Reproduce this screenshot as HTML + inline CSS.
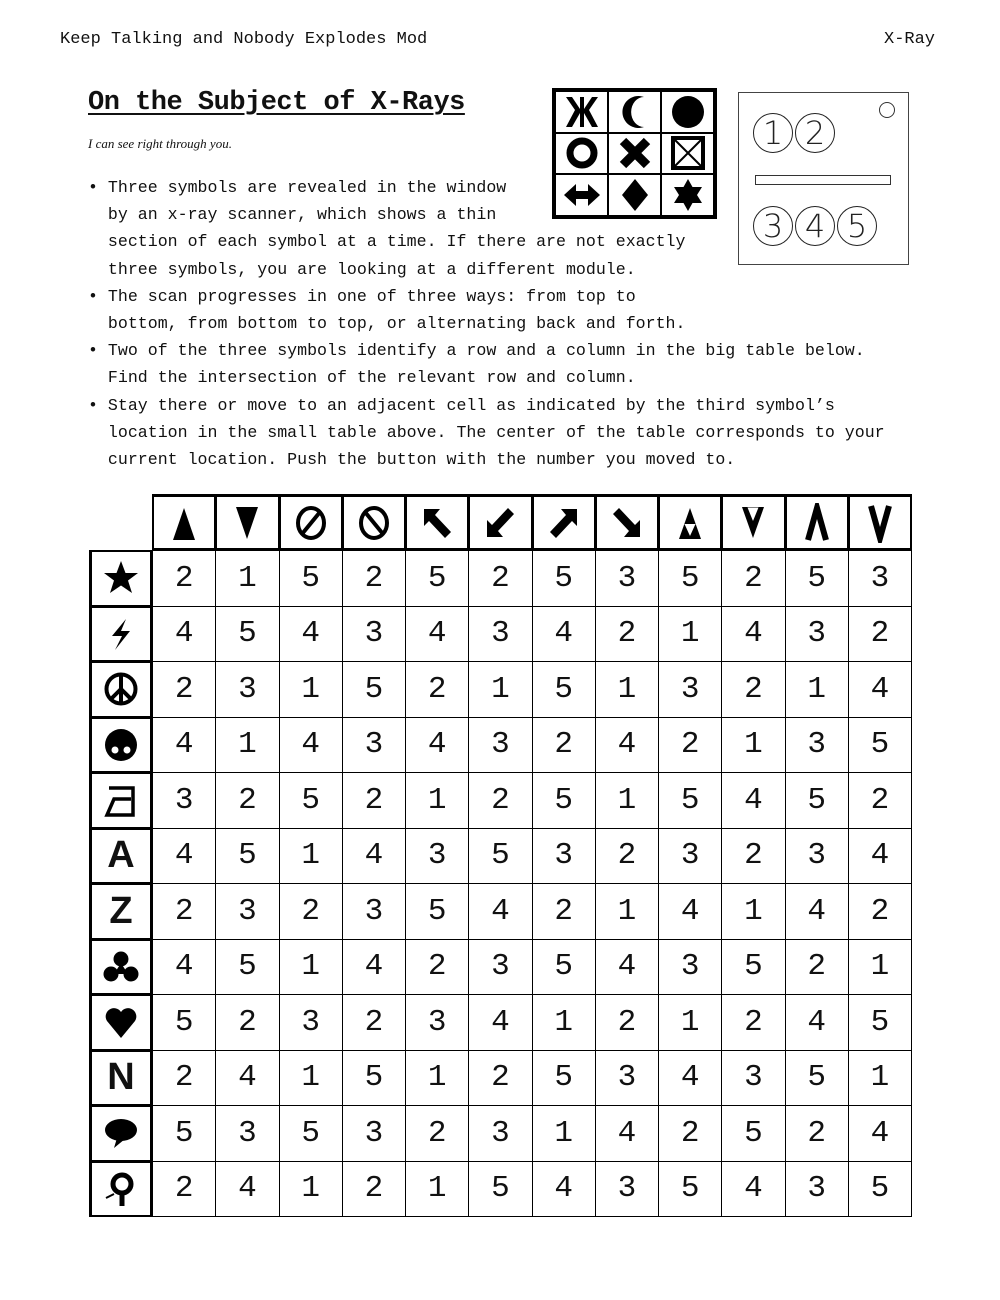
<!DOCTYPE html>
<html><head><meta charset="utf-8"><style>
*{margin:0;padding:0;box-sizing:border-box}
body{width:1000px;height:1300px;background:#fff;position:relative;font-family:"Liberation Mono",monospace;color:#111;overflow:hidden}
.a{position:absolute;white-space:nowrap}
.hdr{font-size:17px;top:30px}
h1{position:absolute;left:88px;top:88px;font-size:27px;font-weight:bold;text-decoration:underline;text-decoration-thickness:2px;text-underline-offset:4px;letter-spacing:-0.5px;font-family:"Liberation Mono",monospace}
.sub{left:88px;top:136px;font-size:13px;font-style:italic;font-family:"Liberation Serif",serif}
.txt{left:88px;top:174px;font-size:16.6px;line-height:27.2px;white-space:pre}
.sg{position:absolute;left:552px;top:88px;width:165px;height:131px;border:3px solid #000;display:grid;grid-template-columns:repeat(3,1fr);grid-template-rows:repeat(3,1fr)}
.sg div{border:1.5px solid #000;display:flex;align-items:center;justify-content:center;overflow:hidden}
.mod{position:absolute;left:738px;top:92px;width:171px;height:173px;border:1.5px solid #444}
.c{position:absolute;width:40px;height:40px;border:1.3px solid #222;border-radius:50%;font-family:"DejaVu Sans",sans-serif;font-weight:200;font-size:32px;line-height:38px;text-align:center;color:#222}
.tb{position:absolute;left:89px;top:494px;width:822px;height:722px;display:grid;grid-template-columns:63px repeat(12,1fr);grid-template-rows:56px repeat(12,1fr)}
.tb div{border:1px solid #000;display:flex;align-items:center;justify-content:center;font-size:31px;margin:0 -1px -1px 0}
.tb .h{border-width:3px 2px 3px 2px}
.tb .r{border-width:2px 3px 2px 3px;font-family:"Liberation Sans",sans-serif;font-weight:bold;font-size:38px}
.tb .e{border:none}
svg{display:block;flex-shrink:0}
</style></head><body>
<div class="a hdr" style="left:60px">Keep Talking and Nobody Explodes Mod</div>
<div class="a hdr" style="left:884px">X-Ray</div>
<h1>On the Subject of X-Rays</h1>
<div class="a sub">I can see right through you.</div>
<div class="a txt">• Three symbols are revealed in the window
  by an x-ray scanner, which shows a thin
  section of each symbol at a time. If there are not exactly
  three symbols, you are looking at a different module.
• The scan progresses in one of three ways: from top to
  bottom, from bottom to top, or alternating back and forth.
• Two of the three symbols identify a row and a column in the big table below.
  Find the intersection of the relevant row and column.
• Stay there or move to an adjacent cell as indicated by the third symbol’s
  location in the small table above. The center of the table corresponds to your
  current location. Push the button with the number you moved to.</div>

<div class="sg">
<div><svg width="36" height="36" viewBox="0 0 36 36"><path d="M16 3H20V15L28 3H34L25 16L34 33H28L20 19V33H16V19L8 33H2L11 16L2 3H8L16 15Z"/></svg></div>
<div><svg width="36" height="36" viewBox="0 0 36 36"><path d="M27 3A16 16 0 1 0 27 33A12 14 0 1 1 27 3Z"/></svg></div>
<div><svg width="36" height="36"><circle cx="18" cy="18" r="16"/></svg></div>
<div><svg width="36" height="36"><circle cx="18" cy="18" r="12" fill="none" stroke="#000" stroke-width="7"/></svg></div>
<div><svg width="36" height="36"><path d="M6 6L30 30M30 6L6 30" stroke="#000" stroke-width="9"/></svg></div>
<div><svg width="36" height="36"><rect x="3" y="3" width="30" height="30" fill="none" stroke="#000" stroke-width="4"/><path d="M5 5L31 31M31 5L5 31" stroke="#000" stroke-width="2"/></svg></div>
<div><svg width="40" height="30"><path d="M2 15L14 4V11H26V4L38 15L26 26V19H14V26Z"/></svg></div>
<div><svg width="30" height="36"><path d="M15 2L28 18L15 34L2 18Z"/></svg></div>
<div><svg width="34" height="36"><path d="M17 2L21.5 10H31L26 18L31 26H21.5L17 34L12.5 26H3L8 18L3 10H12.5Z"/></svg></div>
</div>

<div class="mod">
<div class="c" style="left:14px;top:20px">1</div>
<div class="c" style="left:56px;top:20px">2</div>
<div style="position:absolute;left:140px;top:9px;width:16px;height:16px;border:1.2px solid #333;border-radius:50%"></div>
<div style="position:absolute;left:16px;top:82px;width:136px;height:10px;border:1.3px solid #333"></div>
<div class="c" style="left:14px;top:113px">3</div>
<div class="c" style="left:56px;top:113px">4</div>
<div class="c" style="left:98px;top:113px">5</div>
</div>

<div class="tb">
<div class="e"></div>
<div class="h"><svg width="40" height="40"><path d="M20 5L31 37H9Z"/></svg></div>
<div class="h"><svg width="40" height="40"><path d="M9 4H31L20 36Z"/></svg></div>
<div class="h"><svg width="40" height="40"><ellipse cx="20" cy="20" rx="13" ry="15" fill="none" stroke="#000" stroke-width="4"/><path d="M11 31L29 9" stroke="#000" stroke-width="4"/></svg></div>
<div class="h"><svg width="40" height="40"><ellipse cx="20" cy="20" rx="13" ry="15" fill="none" stroke="#000" stroke-width="4"/><path d="M11 9L29 31" stroke="#000" stroke-width="4"/></svg></div>
<div class="h"><svg width="40" height="40"><path d="M7 6H23L18 12L34 29L28 35L12 18L7 23Z"/></svg></div>
<div class="h"><svg width="40" height="40"><path d="M7 34H23L18 28L34 11L28 5L12 22L7 17Z"/></svg></div>
<div class="h"><svg width="40" height="40"><path d="M33 6H17L22 12L6 29L12 35L28 18L33 23Z"/></svg></div>
<div class="h"><svg width="40" height="40"><path d="M33 34H17L22 28L6 11L12 5L28 22L33 17Z"/></svg></div>
<div class="h"><svg width="40" height="40"><path d="M20 5L31 36H9Z"/><path d="M14.5 21H25.5L20 33Z" fill="#fff"/></svg></div>
<div class="h"><svg width="40" height="40"><path d="M9 4H31L20 35Z"/><path d="M14.5 4.5H25.5L20 18Z" fill="#fff"/></svg></div>
<div class="h"><svg width="40" height="40"><path d="M11 37L20 5L29 37" fill="none" stroke="#000" stroke-width="6"/></svg></div>
<div class="h"><svg width="40" height="40"><path d="M11 3L20 35L29 3" fill="none" stroke="#000" stroke-width="6"/></svg></div>

<div class="r"><svg width="38" height="38"><path d="M19 2L23.5 14H36L26 21.5L30 34L19 26.5L8 34L12 21.5L2 14H14.5Z"/></svg></div>
<div>2</div><div>1</div><div>5</div><div>2</div><div>5</div><div>2</div><div>5</div><div>3</div><div>5</div><div>2</div><div>5</div><div>3</div>
<div class="r"><svg width="38" height="38"><path d="M24 4L10 21H20L13 35L28 16H19Z"/></svg></div>
<div>4</div><div>5</div><div>4</div><div>3</div><div>4</div><div>3</div><div>4</div><div>2</div><div>1</div><div>4</div><div>3</div><div>2</div>
<div class="r"><svg width="38" height="38"><circle cx="19" cy="19" r="14.5" fill="none" stroke="#000" stroke-width="4"/><path d="M19 5V33M19 19L9 29M19 19L29 29" stroke="#000" stroke-width="4"/></svg></div>
<div>2</div><div>3</div><div>1</div><div>5</div><div>2</div><div>1</div><div>5</div><div>1</div><div>3</div><div>2</div><div>1</div><div>4</div>
<div class="r"><svg width="38" height="38"><circle cx="19" cy="19" r="16"/><circle cx="13" cy="24" r="3.5" fill="#fff"/><circle cx="25" cy="24" r="3.5" fill="#fff"/></svg></div>
<div>4</div><div>1</div><div>4</div><div>3</div><div>4</div><div>3</div><div>2</div><div>4</div><div>2</div><div>1</div><div>3</div><div>5</div>
<div class="r"><svg width="38" height="38"><path d="M7 7H31V34H5L12 18H29" fill="none" stroke="#000" stroke-width="3.5"/></svg></div>
<div>3</div><div>2</div><div>5</div><div>2</div><div>1</div><div>2</div><div>5</div><div>1</div><div>5</div><div>4</div><div>5</div><div>2</div>
<div class="r">A</div>
<div>4</div><div>5</div><div>1</div><div>4</div><div>3</div><div>5</div><div>3</div><div>2</div><div>3</div><div>2</div><div>3</div><div>4</div>
<div class="r">Z</div>
<div>2</div><div>3</div><div>2</div><div>3</div><div>5</div><div>4</div><div>2</div><div>1</div><div>4</div><div>1</div><div>4</div><div>2</div>
<div class="r"><svg width="38" height="38"><circle cx="19" cy="11" r="7.5"/><circle cx="9" cy="26" r="7.5"/><circle cx="29" cy="26" r="7.5"/><path d="M19 15L12 26H26Z"/></svg></div>
<div>4</div><div>5</div><div>1</div><div>4</div><div>2</div><div>3</div><div>5</div><div>4</div><div>3</div><div>5</div><div>2</div><div>1</div>
<div class="r"><svg width="38" height="38"><path d="M19 35L5 18A8 8 0 0 1 19 9A8 8 0 0 1 33 18Z"/></svg></div>
<div>5</div><div>2</div><div>3</div><div>2</div><div>3</div><div>4</div><div>1</div><div>2</div><div>1</div><div>2</div><div>4</div><div>5</div>
<div class="r">N</div>
<div>2</div><div>4</div><div>1</div><div>5</div><div>1</div><div>2</div><div>5</div><div>3</div><div>4</div><div>3</div><div>5</div><div>1</div>
<div class="r"><svg width="38" height="38"><ellipse cx="19" cy="16" rx="16" ry="11"/><path d="M15 24L12 34L23 25Z"/></svg></div>
<div>5</div><div>3</div><div>5</div><div>3</div><div>2</div><div>3</div><div>1</div><div>4</div><div>2</div><div>5</div><div>2</div><div>4</div>
<div class="r"><svg width="38" height="38"><circle cx="20" cy="14" r="9" fill="none" stroke="#000" stroke-width="5"/><path d="M20 22V36" stroke="#000" stroke-width="5"/><path d="M4 28L12 24" stroke="#000" stroke-width="2"/></svg></div>
<div>2</div><div>4</div><div>1</div><div>2</div><div>1</div><div>5</div><div>4</div><div>3</div><div>5</div><div>4</div><div>3</div><div>5</div>
</div>
</body></html>
